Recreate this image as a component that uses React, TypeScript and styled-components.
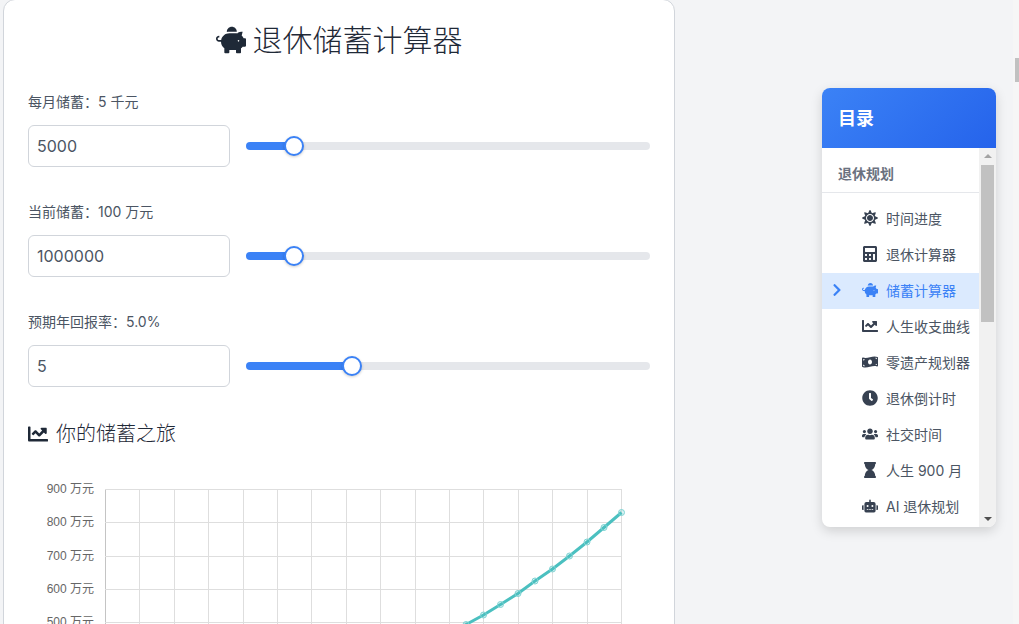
import React from 'react';
import styled, { createGlobalStyle } from 'styled-components';
import {
    FaPiggyBank,
    FaChartLine,
    FaSun,
    FaCalculator,
    FaMoneyBillWave,
    FaClock,
    FaUsers,
    FaHourglass,
    FaRobot,
    FaChevronRight,
} from 'react-icons/fa';

const Colors = {
    page: '#f3f4f6',
    dark: '#1f2937',
    text: '#4b5563',
    icon: '#374151',
    line: '#d1d5db',
    blue: '#3b82f6',
    blueDark: '#2563eb',
    track: '#e5e7eb',
};

const fontStack = `Inter, 'Noto Sans CJK SC', sans-serif`;

const GlobalStyle = createGlobalStyle`
    html, body {
        margin: 0;
        padding: 0;
        height: 100%;
        overflow: hidden;
        background: ${Colors.page};
        font-family: ${fontStack};
    }
`;

const fields = [
    { label: '每月储蓄：5 千元', value: 5000, max: 50000 },
    { label: '当前储蓄：100 万元', value: 1000000, max: 10000000 },
    { label: '预期年回报率：5.0%', value: 5, max: 20 },
];

const tocItems = [
    { name: '时间进度', icon: FaSun },
    { name: '退休计算器', icon: FaCalculator },
    { name: '储蓄计算器', icon: FaPiggyBank, active: true },
    { name: '人生收支曲线', icon: FaChartLine },
    { name: '零遗产规划器', icon: FaMoneyBillWave },
    { name: '退休倒计时', icon: FaClock },
    { name: '社交时间', icon: FaUsers },
    { name: '人生 900 月', icon: FaHourglass },
    { name: 'AI 退休规划', icon: FaRobot },
];

function App() {
    return (
        <Page>
            <GlobalStyle />
            <Card>
                <Title>
                    <FaPiggyBank />
                    退休储蓄计算器
                </Title>
                {fields.map((f) => (
                    <Field key={f.label}>
                        <FieldLabel>{f.label}</FieldLabel>
                        <FieldRow>
                            <NumberInput type="text" defaultValue={f.value} />
                            <Slider
                                type="range"
                                min={0}
                                max={f.max}
                                defaultValue={f.value}
                                style={{ '--fill': `${(f.value / f.max) * 100}%` } as React.CSSProperties}
                            />
                        </FieldRow>
                    </Field>
                ))}
                <SubTitle>
                    <FaChartLine />
                    你的储蓄之旅
                </SubTitle>
                <Chart />
            </Card>
            <TocColumn>
                <Toc>
                    <TocHeader>目录</TocHeader>
                    <TocBody>
                        <TocList>
                            <TocSection>退休规划</TocSection>
                            <TocItems>
                                {tocItems.map((item) => (
                                    <TocItem key={item.name} $active={item.active}>
                                        <TocArrow>{item.active && <FaChevronRight />}</TocArrow>
                                        <TocIcon>
                                            <item.icon />
                                        </TocIcon>
                                        {item.name}
                                    </TocItem>
                                ))}
                            </TocItems>
                        </TocList>
                        <TocScroll>
                            <ArrowUp />
                            <TocThumb />
                            <TocScrollGap />
                            <ArrowDown />
                        </TocScroll>
                    </TocBody>
                </Toc>
            </TocColumn>
            <PageScroll>
                <PageThumb />
            </PageScroll>
        </Page>
    );
}

//#region Chart
const chartLeft = 105;
const chartTop = 20;
const stepX = 516 / 15;
const stepY = 33.3;
const curve = [
    [621.5, 43.5],
    [604, 58.5],
    [587, 73],
    [569.5, 87],
    [552.5, 100],
    [535, 112],
    [518, 124.5],
    [500.5, 135.5],
    [483.5, 146],
    [466, 155.5],
    [449, 165],
];

function Chart() {
    const points = curve.map((p) => p.join(',')).join(' ');
    return (
        <ChartSvg width="672" height="160" viewBox="0 0 672 160">
            {Array.from({ length: 16 }, (_, i) => {
                const x = Math.round(chartLeft + i * stepX) + 0.5;
                return (
                    <line
                        key={i}
                        x1={x}
                        x2={x}
                        y1={chartTop}
                        y2={160}
                        stroke={i === 0 ? '#c4c4c4' : '#dedede'}
                    />
                );
            })}
            {['900', '800', '700', '600', '500'].map((label, i) => {
                const y = Math.round(chartTop + i * stepY) + 0.5;
                return (
                    <g key={label}>
                        <line x1={chartLeft} x2={622} y1={y} y2={y} stroke="#dedede" />
                        <ChartLabel x={94} y={y + 3} textAnchor="end">
                            {label} 万元
                        </ChartLabel>
                    </g>
                );
            })}
            <polyline points={points} fill="none" stroke="#4bc0c0" strokeWidth="3" />
            {curve.map(([x, y]) => (
                <circle key={x} cx={x} cy={y} r="3" fill="rgba(75,192,192,0.2)" stroke="#7fd4d4" strokeWidth="1" />
            ))}
        </ChartSvg>
    );
}

const ChartSvg = styled.svg`
    display: block;
    margin: 21px 0 0 -28px;
`;

const ChartLabel = styled.text`
    font-family: 'Liberation Sans', 'Noto Sans CJK SC', sans-serif;
    font-size: 12px;
    fill: #666;
`;
//#endregion

const Page = styled.div`
    display: flex;
    width: 1019px;
    height: 624px;
    overflow: hidden;
    padding-left: 3px;
    box-sizing: border-box;
`;

//#region Card
const Card = styled.main`
    flex: none;
    width: 672px;
    height: 800px;
    margin-top: -1px;
    padding: 0 24px;
    box-sizing: border-box;
    background: #fff;
    border: 1px solid ${Colors.line};
    border-radius: 12px;
`;

const Title = styled.h1`
    display: flex;
    justify-content: center;
    align-items: center;
    gap: 7px;
    height: 80px;
    margin: 0 0 12px;
    font-size: 30px;
    font-weight: 300;
    line-height: 80px;
    color: ${Colors.dark};

    svg {
        font-size: 30px;
    }
`;

const Field = styled.div`
    height: 110px;
`;

const FieldLabel = styled.div`
    height: 20px;
    margin-bottom: 13px;
    font-size: 14px;
    line-height: 20px;
    color: ${Colors.text};
`;

const FieldRow = styled.div`
    display: flex;
    align-items: center;
    gap: 16px;
`;

const NumberInput = styled.input`
    flex: none;
    width: 202px;
    height: 42px;
    padding: 0 8px;
    box-sizing: border-box;
    border: 1px solid ${Colors.line};
    border-radius: 6px;
    background: #fff;
    font-family: ${fontStack};
    font-size: 16px;
    color: ${Colors.text};
    outline: none;
`;

const Slider = styled.input`
    flex: 1;
    min-width: 0;
    height: 8px;
    margin: 0;
    border-radius: 4px;
    appearance: none;
    background: linear-gradient(
        to right,
        ${Colors.blue} var(--fill),
        ${Colors.track} var(--fill)
    );

    &::-webkit-slider-thumb {
        appearance: none;
        width: 20px;
        height: 20px;
        box-sizing: border-box;
        border: 2px solid ${Colors.blue};
        border-radius: 50%;
        background: #fff;
        box-shadow: 0 1px 3px rgba(0, 0, 0, 0.2);
    }
`;

const SubTitle = styled.h2`
    display: flex;
    align-items: center;
    gap: 8px;
    height: 28px;
    margin: -2px 0 0;
    font-size: 20px;
    font-weight: 300;
    line-height: 28px;
    color: ${Colors.dark};
`;
//#endregion

//#region Toc
const TocColumn = styled.div`
    flex: 1;
    display: flex;
    justify-content: flex-end;
    padding: 88px 23px 0 0;
`;

const Toc = styled.nav`
    display: flex;
    flex-direction: column;
    width: 174px;
    height: 439px;
    overflow: hidden;
    background: #fff;
    border-radius: 8px;
    box-shadow: 0 4px 12px rgba(0, 0, 0, 0.15);
`;

const TocHeader = styled.div`
    flex: none;
    height: 60px;
    padding-left: 16px;
    background: linear-gradient(135deg, ${Colors.blue}, ${Colors.blueDark});
    font-size: 18px;
    font-weight: 700;
    line-height: 61px;
    color: #fff;
`;

const TocBody = styled.div`
    flex: 1;
    display: flex;
    min-height: 0;
`;

const TocList = styled.div`
    flex: 1;
    min-width: 0;
    overflow: hidden;
`;

const TocSection = styled.div`
    height: 45px;
    padding-left: 16px;
    box-sizing: border-box;
    border-bottom: 1px solid ${Colors.track};
    font-size: 14px;
    font-weight: 700;
    line-height: 51px;
    color: #6b7280;
`;

const TocItems = styled.div`
    padding-top: 8px;
`;

const TocItem = styled.div<{ $active?: boolean }>`
    display: flex;
    align-items: center;
    height: 36px;
    padding-bottom: 2px;
    box-sizing: border-box;
    font-size: 14px;
    white-space: nowrap;
    color: ${(p) => (p.$active ? Colors.blue : Colors.text)};
    background: ${(p) => (p.$active ? '#dbeafe' : 'transparent')};

    svg {
        color: ${(p) => (p.$active ? Colors.blue : Colors.icon)};
    }
`;

const TocArrow = styled.span`
    flex: none;
    display: flex;
    width: 32px;
    padding-left: 8px;
    font-size: 14px;
`;

const TocIcon = styled.span`
    flex: none;
    display: flex;
    justify-content: center;
    width: 16px;
    margin-right: 8px;
    font-size: 16px;
`;

const TocScroll = styled.div`
    flex: none;
    display: flex;
    flex-direction: column;
    align-items: center;
    width: 17px;
    background: #f1f1f1;
`;

const ArrowUp = styled.div`
    flex: none;
    width: 0;
    height: 0;
    margin: 6px 0 7px;
    border: solid transparent;
    border-width: 0 4px 4px;
    border-bottom-color: #a3a3a3;
`;

const ArrowDown = styled.div`
    flex: none;
    width: 0;
    height: 0;
    margin: 7px 0 6px;
    border: solid transparent;
    border-width: 4px 4px 0;
    border-top-color: #505050;
`;

const TocThumb = styled.div`
    flex: none;
    width: 13px;
    height: 157px;
    background: #c1c1c1;
`;

const TocScrollGap = styled.div`
    flex: 1;
`;
//#endregion

const PageScroll = styled.div`
    flex: none;
    width: 6px;
    margin-left: -6px;
    padding: 58px 0 0 2px;
    box-sizing: border-box;
    background: #f6f6f6;
`;

const PageThumb = styled.div`
    height: 24px;
    background: #c1c1c1;
`;

export default App;
